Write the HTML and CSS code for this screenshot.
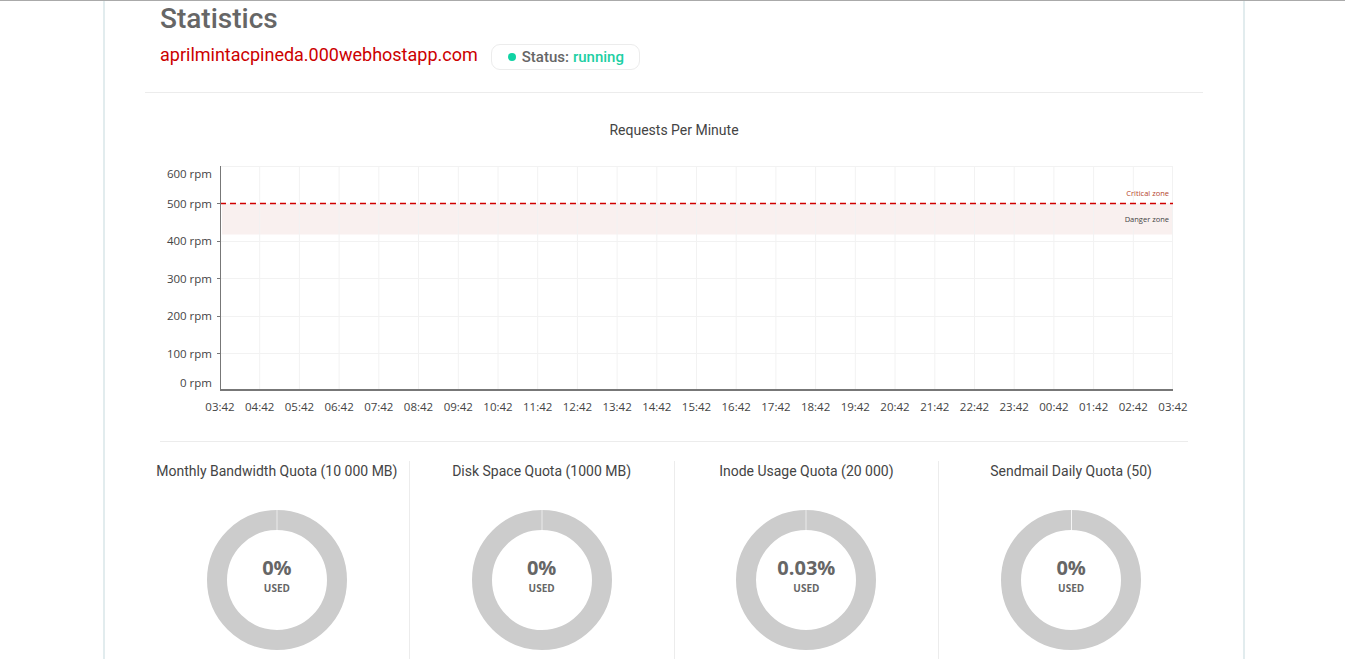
FILE: index.html
```html
<!DOCTYPE html>
<html lang="en">
<head>
<meta charset="utf-8">
<title>Statistics</title>
<link rel="stylesheet" href="styles.css">
</head>
<body>
<div class="panel">
  <header class="head">
    <h1 class="title">Statistics</h1>
    <div class="site-row">
      <span class="domain">aprilmintacpineda.000webhostapp.com</span>
      <span class="status"><span class="dot"></span><span class="status-label">Status:</span><span class="status-value">running</span></span>
    </div>
  </header>
  <hr class="divider">
  <section class="chart">
    <div class="chart-title">Requests Per Minute</div>
    <svg class="chart-svg" width="1058" height="270" viewBox="0 0 1058 270">
      <rect x="77" y="52.5" width="951" height="31" fill="#f9f0ef"/>
      <g stroke="#f2f2f2" stroke-width="1">
        <line x1="75" y1="15.5" x2="1028" y2="15.5"/>
        <line x1="75" y1="90.5" x2="1028" y2="90.5"/>
        <line x1="75" y1="127.5" x2="1028" y2="127.5"/>
        <line x1="75" y1="165.5" x2="1028" y2="165.5"/>
        <line x1="75" y1="202.5" x2="1028" y2="202.5"/>
        <line x1="114.7" y1="15" x2="114.7" y2="238"/>
        <line x1="154.4" y1="15" x2="154.4" y2="238"/>
        <line x1="194.1" y1="15" x2="194.1" y2="238"/>
        <line x1="233.8" y1="15" x2="233.8" y2="238"/>
        <line x1="273.5" y1="15" x2="273.5" y2="238"/>
        <line x1="313.3" y1="15" x2="313.3" y2="238"/>
        <line x1="353" y1="15" x2="353" y2="238"/>
        <line x1="392.7" y1="15" x2="392.7" y2="238"/>
        <line x1="432.4" y1="15" x2="432.4" y2="238"/>
        <line x1="472.1" y1="15" x2="472.1" y2="238"/>
        <line x1="511.8" y1="15" x2="511.8" y2="238"/>
        <line x1="551.5" y1="15" x2="551.5" y2="238"/>
        <line x1="591.2" y1="15" x2="591.2" y2="238"/>
        <line x1="630.9" y1="15" x2="630.9" y2="238"/>
        <line x1="670.6" y1="15" x2="670.6" y2="238"/>
        <line x1="710.3" y1="15" x2="710.3" y2="238"/>
        <line x1="750" y1="15" x2="750" y2="238"/>
        <line x1="789.8" y1="15" x2="789.8" y2="238"/>
        <line x1="829.5" y1="15" x2="829.5" y2="238"/>
        <line x1="869.2" y1="15" x2="869.2" y2="238"/>
        <line x1="908.9" y1="15" x2="908.9" y2="238"/>
        <line x1="948.6" y1="15" x2="948.6" y2="238"/>
        <line x1="988.3" y1="15" x2="988.3" y2="238"/>
        <line x1="1027.5" y1="15" x2="1027.5" y2="238"/>
      </g>
      <line x1="75" y1="52.5" x2="1028" y2="52.5" stroke="#d00000" stroke-width="1.3" stroke-dasharray="6 4"/>
      <g stroke="#777" stroke-width="1">
        <line x1="75.5" y1="15" x2="75.5" y2="239"/>
        <line x1="72" y1="52.5" x2="75" y2="52.5"/>
        <line x1="72" y1="90.5" x2="75" y2="90.5"/>
        <line x1="72" y1="127.5" x2="75" y2="127.5"/>
        <line x1="72" y1="165.5" x2="75" y2="165.5"/>
        <line x1="72" y1="202.5" x2="75" y2="202.5"/>
      </g>
      <line x1="75" y1="239" x2="1028" y2="239" stroke="#777" stroke-width="2"/>
      <g class="axis-text" text-anchor="end">
        <text x="67" y="27">600 rpm</text>
        <text x="67" y="57">500 rpm</text>
        <text x="67" y="94">400 rpm</text>
        <text x="67" y="132">300 rpm</text>
        <text x="67" y="169">200 rpm</text>
        <text x="67" y="207">100 rpm</text>
        <text x="67" y="236">0 rpm</text>
      </g>
      <g class="axis-text" text-anchor="middle">
        <text x="75" y="260">03:42</text>
        <text x="114.7" y="260">04:42</text>
        <text x="154.4" y="260">05:42</text>
        <text x="194.1" y="260">06:42</text>
        <text x="233.8" y="260">07:42</text>
        <text x="273.5" y="260">08:42</text>
        <text x="313.3" y="260">09:42</text>
        <text x="353" y="260">10:42</text>
        <text x="392.7" y="260">11:42</text>
        <text x="432.4" y="260">12:42</text>
        <text x="472.1" y="260">13:42</text>
        <text x="511.8" y="260">14:42</text>
        <text x="551.5" y="260">15:42</text>
        <text x="591.2" y="260">16:42</text>
        <text x="630.9" y="260">17:42</text>
        <text x="670.6" y="260">18:42</text>
        <text x="710.3" y="260">19:42</text>
        <text x="750" y="260">20:42</text>
        <text x="789.8" y="260">21:42</text>
        <text x="829.5" y="260">22:42</text>
        <text x="869.2" y="260">23:42</text>
        <text x="908.9" y="260">00:42</text>
        <text x="948.6" y="260">01:42</text>
        <text x="988.3" y="260">02:42</text>
        <text x="1028" y="260">03:42</text>
      </g>
      <text class="zone-text critical" x="1024" y="45" text-anchor="end">Critical zone</text>
      <text class="zone-text danger" x="1024" y="71" text-anchor="end">Danger zone</text>
    </svg>
  </section>
  <hr class="divider divider-inset">
  <section class="quotas">
    <div class="quota">
      <div class="quota-title">Monthly Bandwidth Quota (10 000 MB)</div>
      <div class="donut">
        <svg class="donut-ring" width="140" height="140" viewBox="0 0 140 140"><circle cx="70" cy="70" r="60" fill="none" stroke="#cccccc" stroke-width="20"/><line x1="70" y1="0" x2="70" y2="20" stroke="#ffffff" stroke-width="0.6"/></svg>
        <div class="donut-label"><span class="pct">0%</span><span class="used">USED</span></div>
      </div>
    </div>
    <div class="quota">
      <div class="quota-title">Disk Space Quota (1000 MB)</div>
      <div class="donut">
        <svg class="donut-ring" width="140" height="140" viewBox="0 0 140 140"><circle cx="70" cy="70" r="60" fill="none" stroke="#cccccc" stroke-width="20"/><line x1="70" y1="0" x2="70" y2="20" stroke="#ffffff" stroke-width="0.6"/></svg>
        <div class="donut-label"><span class="pct">0%</span><span class="used">USED</span></div>
      </div>
    </div>
    <div class="quota">
      <div class="quota-title">Inode Usage Quota (20 000)</div>
      <div class="donut">
        <svg class="donut-ring" width="140" height="140" viewBox="0 0 140 140"><circle cx="70" cy="70" r="60" fill="none" stroke="#cccccc" stroke-width="20"/><line x1="70" y1="0" x2="70" y2="20" stroke="#ffffff" stroke-width="0.6"/></svg>
        <div class="donut-label"><span class="pct">0.03%</span><span class="used">USED</span></div>
      </div>
    </div>
    <div class="quota">
      <div class="quota-title">Sendmail Daily Quota (50)</div>
      <div class="donut">
        <svg class="donut-ring" width="140" height="140" viewBox="0 0 140 140"><circle cx="70" cy="70" r="60" fill="none" stroke="#cccccc" stroke-width="20"/><line x1="70.5" y1="0" x2="70.5" y2="20" stroke="#ffffff" stroke-width="0.8"/></svg>
        <div class="donut-label"><span class="pct">0%</span><span class="used">USED</span></div>
      </div>
    </div>
  </section>
</div>
</body>
</html>
```

FILE: styles.css
```css
* { box-sizing: border-box; }

html, body { height: 100%; }

body {
  margin: 0;
  border-top: 1px solid #aaaaaa;
  background: #ffffff;
  font-family: Roboto, "Liberation Sans", sans-serif;
  color: #444;
  overflow: hidden;
}

.panel {
  margin-left: 103px;
  width: 1142px;
  min-height: calc(100vh - 1px);
  border-left: 2px solid #e2ecee;
  border-right: 2px solid #e2ecee;
  padding: 1px 40px 0;
}

.head {
  padding: 0 15px;
}

.title {
  margin: 0;
  font-size: 28px;
  line-height: 33px;
  font-weight: 500;
  color: #666666;
}

.site-row {
  display: flex;
  align-items: baseline;
  gap: 13px;
  margin-top: 9px;
}

.domain {
  font-size: 18px;
  line-height: 20px;
  color: #cc0000;
}

.status {
  display: inline-flex;
  align-items: center;
  height: 26px;
  padding: 0 15px 0 16px;
  border: 1px solid #ececec;
  border-radius: 9px;
  font-size: 15px;
  line-height: 24px;
  font-weight: 500;
  color: #666666;
  white-space: nowrap;
}

.dot {
  width: 8px;
  height: 8px;
  border-radius: 50%;
  background: #10d3a4;
  margin-right: 6px;
}

.status-label { margin-right: 4px; }

.status-value { color: #1ccfa3; }

.divider {
  margin: 22px 0 0;
  border: 0;
  border-top: 1px solid #ececec;
  height: 0;
}

.divider-inset {
  margin: 20px 15px 0;
}

.chart-title {
  margin-top: 27px;
  text-align: center;
  font-size: 14px;
  line-height: 20px;
  color: #444;
}

.chart-svg {
  display: block;
  margin-top: 11px;
}

.axis-text {
  font-family: "Open Sans", "Noto Sans", sans-serif;
  font-size: 11.5px;
  fill: #444;
}

.zone-text {
  font-family: "Open Sans", "Noto Sans", sans-serif;
  font-size: 7.5px;
}

.critical { fill: #b5452d; }
.danger { fill: #444; }

.quotas {
  display: flex;
  margin-top: 19px;
}

.quota {
  flex: 1 1 0;
  display: flex;
  flex-direction: column;
  align-items: center;
  min-height: 200px;
}

.quota + .quota {
  border-left: 1px solid #ececec;
}

.quota-title {
  font-size: 14px;
  line-height: 20px;
  color: #444;
  white-space: nowrap;
}

.donut {
  display: grid;
  margin-top: 29px;
  width: 140px;
  height: 140px;
}

.donut-ring,
.donut-label {
  grid-area: 1 / 1;
}

.donut-ring { display: block; }

.donut-label {
  justify-self: center;
  align-self: start;
  margin-top: 47px;
  display: flex;
  flex-direction: column;
  align-items: center;
  font-family: "Open Sans", "Noto Sans", sans-serif;
  font-weight: 700;
  color: #666666;
}

.pct {
  font-size: 20px;
  line-height: 22px;
}

.used {
  margin-top: 1px;
  font-size: 10px;
  line-height: 16px;
}
```
